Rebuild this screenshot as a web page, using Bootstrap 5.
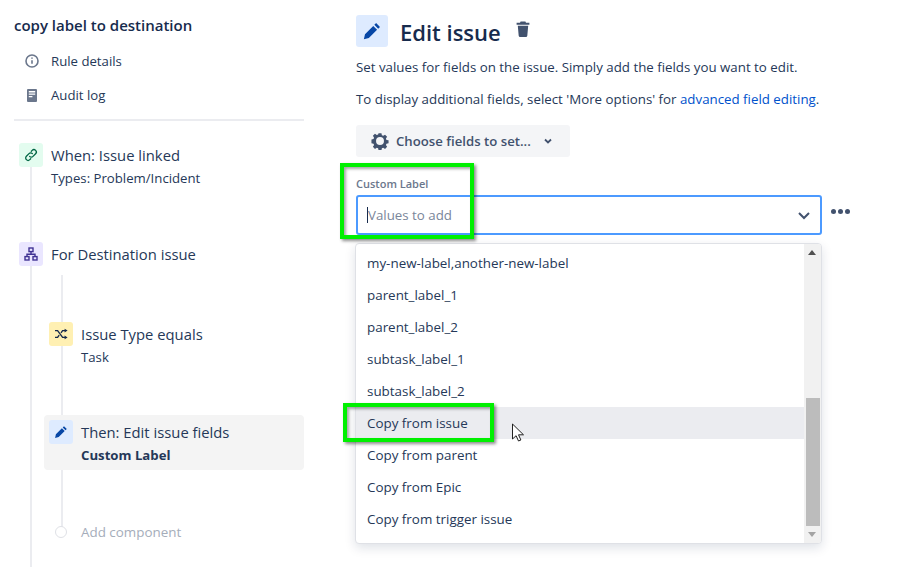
<!DOCTYPE html>
<html lang="en">
<head>
  <meta charset="UTF-8">
  <meta name="viewport" content="width=device-width, initial-scale=1.0">
  <title>Edit issue</title>
  <link href="https://cdn.jsdelivr.net/npm/bootstrap@5.3.0/dist/css/bootstrap.min.css" rel="stylesheet">
  <style>
    html, body { height: 567px; overflow: hidden; }
    body { font-family: "Open Sans", "Noto Sans", sans-serif; color: #172b4d; background: #fff; font-size: 13.2px; position: relative; }
    .page-wrap { height: 567px; padding-left: 14px; }

    /* sidebar */
    .side-col { width: 290px; flex: none; position: relative; height: 567px; }
    .rule-title { font-size: 15px; font-weight: 600; line-height: 20px; padding-top: 15px; }
    .side-link { height: 34px; padding-left: 9px; gap: 10px; color: #253858; }
    .side-link svg { width: 18px; height: 18px; flex: none; }
    .side-link span { padding-top: 1px; }
    .side-links { padding-top: 9px; height: 74px; }
    .side-rule { height: 2px; background: #ebecf0; margin-top: 10px; }
    .line-a { position: absolute; left: 16px; top: 166px; bottom: 0; width: 2px; background: #ebecf0; }
    .line-b { position: absolute; left: 47px; top: 275px; height: 256px; width: 2px; background: #ebecf0; }
    .step { position: relative; gap: 8px; }
    .step-icon { width: 24px; height: 24px; border-radius: 3px; flex: none; }
    .step-icon svg { width: 16px; height: 16px; }
    .step-name { font-size: 14.8px; line-height: 24px; color: #253858; }
    .step-sub { font-size: 13.2px; line-height: 20px; color: #253858; margin-top: 1px; }
    .ic-green { background: #e3fcef; color: #006644; }
    .ic-purple { background: #eae6ff; color: #403294; }
    .ic-yellow { background: #fff0b3; color: #172b4d; }
    .ic-blue { background: #deebff; color: #0747a6; }
    .step-first { margin: 22px 0 0 5px; height: 99px; }
    .step-second { margin-left: 5px; height: 80px; }
    .step-third { margin-left: 35px; height: 93px; }
    .step-active { background: #f4f4f4; border-radius: 4px; margin-left: 30px; padding: 5px; height: 55px; }
    .step-active b { font-weight: 700; }
    .add-comp { margin: 52px 0 0 41px; gap: 14px; color: #a5adba; font-size: 13.4px; line-height: 20px; position: relative; }
    .add-dot { width: 12px; height: 12px; border-radius: 50%; border: 1px solid #dfe1e6; background: #fff; flex: none; }

    /* main */
    .main-col { width: 466px; margin-left: 52px; flex: none; position: relative; }
    .head-row { padding-top: 15px; height: 47px; }
    .big-icon { width: 32px; height: 32px; border-radius: 3px; }
    .big-icon svg { width: 22px; height: 22px; }
    .head-title { font-size: 22px; font-weight: 600; line-height: 32px; margin: 1px 0 0 12px; color: #172b4d; }
    .trash-ic { width: 20px; height: 20px; margin: -4px 0 0 12px; color: #42526e; }
    .desc { line-height: 20px; margin: 10px 0 0; color: #253858; font-size: 13.3px; white-space: nowrap; }
    .desc + .desc { margin-top: 12px; }
    .desc a { color: #0052cc; text-decoration: none; }
    .choose-btn { background: #f4f5f7; border: 0; border-radius: 3px; color: #42526e; font-size: 13.2px; font-weight: 600; height: 32px; width: 214px; padding: 0 0 0 15px; gap: 7px; margin-top: 16px; }
    .choose-btn:hover { background: #f4f5f7; color: #42526e; }
    .choose-btn span { padding-top: 1px; }
    .field-label { font-size: 11px; font-weight: 600; color: #6b778c; line-height: 14px; margin-top: 20px; }
    .pick-box { height: 40px; border: 2px solid #4c9aff; border-radius: 3px; margin-top: 4px; padding: 0 9px; background: #fff; }
    .pick-holder { color: #7a869a; font-size: 13.3px; border-left: 1px solid #172b4d; line-height: 16px; }
    .more-dots { position: absolute; left: 475px; top: 209px; gap: 2px; }
    .more-dots i { width: 5px; height: 5px; border-radius: 50%; background: #42526e; }

    /* dropdown */
    .pick-menu { position: absolute; left: -1px; top: 243px; width: 467px; height: 301px; background: #fff; border: 1px solid #dfe1e6; border-radius: 4px; box-shadow: 0 4px 11px rgba(9,30,66,.13); overflow: hidden; }
    .pick-items { padding-top: 3px; border: 0; border-radius: 0; }
    .pick-item { height: 32px; line-height: 33px; padding: 0 11px; border: 0; color: #253858; font-size: 13.4px; background: transparent; }
    .pick-hot { background: #ebecf0; }
    .scroll-bar { width: 17px; flex: none; background: #f1f1f1; position: relative; }
    .scroll-thumb { position: absolute; left: 2px; right: 1px; top: 154px; height: 128px; background: #bcbcbc; }
    .arrow-up, .arrow-down { position: absolute; left: 4px; width: 0; height: 0; border-left: 4px solid transparent; border-right: 4px solid transparent; }
    .arrow-up { top: 6px; border-bottom: 5px solid #505050; }
    .arrow-down { bottom: 6px; border-top: 5px solid #a3a3a3; }

    /* annotations drawn over the screenshot */
    .mark-box { position: absolute; border: 4px solid #00f000; box-shadow: 2px 2px 3px rgba(0,0,0,.45), inset 2px 2px 3px rgba(0,0,0,.35); pointer-events: none; }
    .mark-one { left: 340px; top: 163px; width: 134px; height: 76px; }
    .mark-two { left: 343px; top: 403px; width: 151px; height: 39px; }
    .mouse-arrow { position: absolute; left: 511px; top: 423px; width: 15px; height: 20px; }
  </style>
</head>
<body>

  <div class="page-wrap d-flex">

    <!-- Sidebar -->
    <aside class="side-col">
      <div class="line-a"></div>
      <div class="line-b"></div>

      <div class="rule-title">copy label to destination</div>
      <div class="side-links">
        <div class="side-link d-flex align-items-center">
          <svg viewBox="0 0 18 18" fill="none" stroke="#6b778c" stroke-width="1.6"><circle cx="9" cy="9" r="6"/><path d="M9 8.2v3.6M9 5.6v1.2"/></svg>
          <span>Rule details</span>
        </div>
        <div class="side-link d-flex align-items-center">
          <svg viewBox="0 0 18 18"><path fill="#6b778c" d="M5 3h8a1 1 0 0 1 1 1v11a1 1 0 0 1-1 1H5a1 1 0 0 1-1-1V4a1 1 0 0 1 1-1z"/><path fill="#fff" d="M5.8 5h6.4v1.4H5.8zM5.8 7.6h6.4v1.2H5.8zM5.8 10h3.6v1.2H5.8z"/></svg>
          <span>Audit log</span>
        </div>
      </div>
      <div class="side-rule"></div>

      <div class="step step-first d-flex">
        <div class="step-icon ic-green d-flex align-items-center justify-content-center">
          <svg viewBox="0 0 16 16" fill="none" stroke="currentColor" stroke-width="1.3" stroke-linecap="round"><path d="M6.6 9.4a2.4 2.4 0 0 0 3.4 0l2.6-2.6a2.4 2.4 0 0 0-3.4-3.4l-.9.9"/><path d="M9.4 6.6a2.4 2.4 0 0 0-3.4 0L3.4 9.2a2.4 2.4 0 0 0 3.4 3.4l.9-.9"/></svg>
        </div>
        <div>
          <div class="step-name">When: Issue linked</div>
          <div class="step-sub">Types: Problem/Incident</div>
        </div>
      </div>

      <div class="step step-second d-flex">
        <div class="step-icon ic-purple d-flex align-items-center justify-content-center">
          <svg viewBox="0 0 16 16" fill="none" stroke="currentColor" stroke-width="1.4"><rect x="6" y="2" width="4" height="3.6"/><rect x="2" y="10.6" width="4" height="3.4"/><rect x="10" y="10.6" width="4" height="3.4"/><path d="M8 5.6v2.6M4 10.6V8.2h8v2.4"/></svg>
        </div>
        <div class="step-name">For Destination issue</div>
      </div>

      <div class="step step-third d-flex">
        <div class="step-icon ic-yellow d-flex align-items-center justify-content-center">
          <svg viewBox="0 0 16 16" fill="none" stroke="currentColor" stroke-width="1.4"><path d="M2 4.6h2.6l5 6.8H12M2 11.4h2.6l1.6-2.2M8 6.8l1.6-2.2H12"/><path fill="currentColor" stroke="none" d="M11.6 2.8l3 1.8-3 1.8zM11.6 9.6l3 1.8-3 1.8z"/></svg>
        </div>
        <div>
          <div class="step-name">Issue Type equals</div>
          <div class="step-sub">Task</div>
        </div>
      </div>

      <div class="step step-active d-flex">
        <div class="step-icon ic-blue d-flex align-items-center justify-content-center">
          <svg viewBox="0 0 16 16"><path fill="currentColor" d="M11 2.2l2.8 2.8-1.3 1.3-2.8-2.8zM8.9 4.3l2.8 2.8-6 6-3.6.9.8-3.7z"/></svg>
        </div>
        <div>
          <div class="step-name">Then: Edit issue fields</div>
          <div class="step-sub"><b>Custom Label</b></div>
        </div>
      </div>

      <div class="add-comp d-flex align-items-center">
        <span class="add-dot"></span>
        <span>Add component</span>
      </div>
    </aside>

    <!-- Main panel -->
    <main class="main-col">
      <div class="head-row d-flex align-items-center">
        <div class="big-icon ic-blue d-flex align-items-center justify-content-center">
          <svg viewBox="0 0 16 16"><path fill="currentColor" d="M11 2.2l2.8 2.8-1.3 1.3-2.8-2.8zM8.9 4.3l2.8 2.8-6 6-3.6.9.8-3.7z"/></svg>
        </div>
        <h1 class="head-title">Edit issue</h1>
        <svg class="trash-ic" viewBox="0 0 20 20"><path fill="currentColor" d="M7.6 2.6h4.8l.6 1.2h3.4v1.9H3.6V3.8H7zM4.8 6.8h10.4l-.9 10a1.4 1.4 0 0 1-1.4 1.2H7.1a1.4 1.4 0 0 1-1.4-1.2z"/></svg>
      </div>

      <p class="desc">Set values for fields on the issue. Simply add the fields you want to edit.</p>
      <p class="desc">To display additional fields, select 'More options' for <a href="#">advanced field editing</a>.</p>

      <button type="button" class="choose-btn btn d-flex align-items-center">
        <svg width="18" height="18" viewBox="0 0 20 20"><path fill="#42526e" fill-rule="evenodd" d="M8.4 1.4h3.2l.5 2.3 1.5.6 2-1.3 2.3 2.3-1.3 2 .6 1.5 2.3.5v3.2l-2.3.5-.6 1.5 1.3 2-2.3 2.3-2-1.3-1.5.6-.5 2.3H8.4l-.5-2.3-1.5-.6-2 1.3-2.3-2.3 1.3-2-.6-1.5-2.3-.5V8.3l2.3-.5.6-1.5-1.3-2 2.3-2.3 2 1.3 1.5-.6zM10 5.6a4.4 4.4 0 1 0 0 8.8 4.4 4.4 0 0 0 0-8.8z"/></svg>
        <span>Choose fields to set...</span>
        <svg class="ms-1" width="12" height="12" viewBox="0 0 12 12" fill="none" stroke="#42526e" stroke-width="1.8"><path d="M3 4.5l3 3 3-3"/></svg>
      </button>

      <div class="field-label">Custom Label</div>
      <div class="pick-box d-flex align-items-center justify-content-between">
        <span class="pick-holder">Values to add</span>
        <svg width="14" height="14" viewBox="0 0 14 14" fill="none" stroke="#42526e" stroke-width="2"><path d="M2 5l5 5 5-5"/></svg>
      </div>
      <div class="more-dots d-flex"><i></i><i></i><i></i></div>

      <div class="pick-menu d-flex">
        <div class="list-group pick-items flex-grow-1">
          <div class="list-group-item pick-item">my-new-label,another-new-label</div>
          <div class="list-group-item pick-item">parent_label_1</div>
          <div class="list-group-item pick-item">parent_label_2</div>
          <div class="list-group-item pick-item">subtask_label_1</div>
          <div class="list-group-item pick-item">subtask_label_2</div>
          <div class="list-group-item pick-item pick-hot">Copy from issue</div>
          <div class="list-group-item pick-item">Copy from parent</div>
          <div class="list-group-item pick-item">Copy from Epic</div>
          <div class="list-group-item pick-item">Copy from trigger issue</div>
        </div>
        <div class="scroll-bar">
          <span class="arrow-up"></span>
          <div class="scroll-thumb"></div>
          <span class="arrow-down"></span>
        </div>
      </div>
    </main>
  </div>

  <!-- green annotations + mouse pointer -->
  <div class="mark-box mark-one"></div>
  <div class="mark-box mark-two"></div>
  <svg class="mouse-arrow" viewBox="0 0 15 20"><path fill="#fff" stroke="#222" stroke-width="1" d="M1.5 1v15l3.6-3.3 2.4 5.3 2.4-1-2.4-5.2h5z"/></svg>

  <script src="https://cdn.jsdelivr.net/npm/bootstrap@5.3.0/dist/js/bootstrap.bundle.min.js"></script>
</body>
</html>
